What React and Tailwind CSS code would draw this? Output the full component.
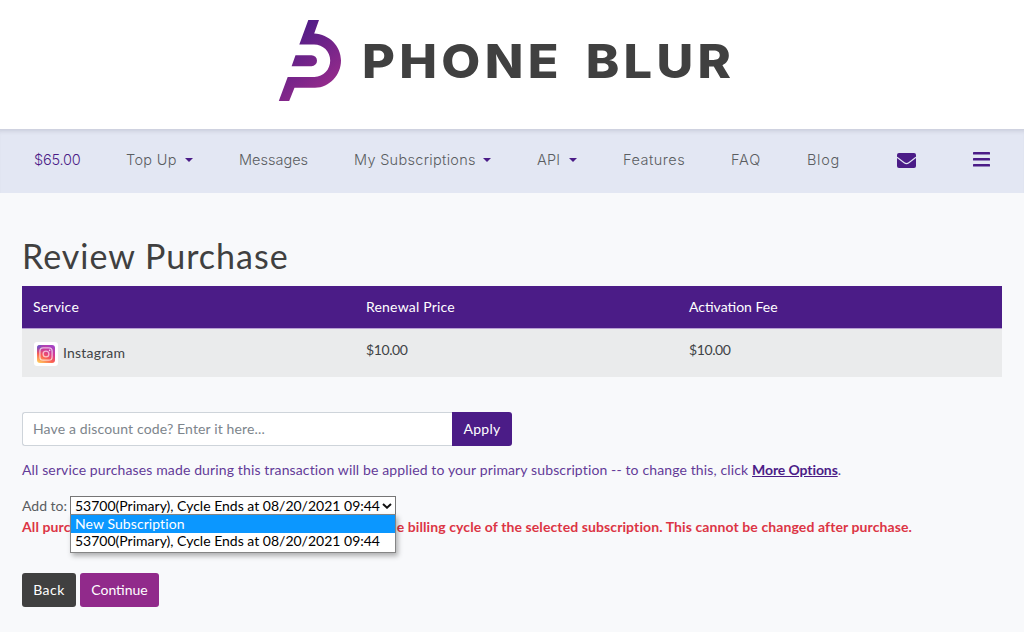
import React from "react";

const Caret = () => (
  <span className="h-0 w-0 border-x-4 border-t-4 border-x-transparent border-t-[#4b1c87]" />
);

const NavItem = ({ children, className }) => (
  <a className={`flex shrink-0 items-center justify-between whitespace-nowrap ${className}`}>{children}</a>
);

const Logo = () => (
  <svg width="64" height="84" viewBox="0 0 64 84" className="shrink-0">
    <defs>
      <linearGradient id="brand" x1="10" y1="10" x2="52" y2="62" gradientUnits="userSpaceOnUse">
        <stop offset="0" stopColor="#4b1c87" />
        <stop offset="1" stopColor="#912a8b" />
      </linearGradient>
    </defs>
    <g fill="url(#brand)">
      <path d="M30.3 1H41L36.2 14.4C51 15 63 27 63 41.5C63 56 51.5 68.5 37 68.8H16.5L11.2 82H.8L9.7 58H36.5C45.5 58 52.2 50.6 52.2 41.6C52.2 32.5 45 25.6 36 25.6H21.3Z" />
      <path d="M17.5 36.2H33.5A5.4 5.4 0 0 1 33.5 47.2H13.6Z" />
    </g>
  </svg>
);

const Instagram = () => (
  <span className="flex h-6 w-6 shrink-0 items-center justify-center rounded-[3px] bg-white">
    <svg width="18" height="18" viewBox="0 0 18 18">
      <defs>
        <linearGradient id="ig" x1="3" y1="18" x2="13" y2="0" gradientUnits="userSpaceOnUse">
          <stop offset="0" stopColor="#ffc85c" />
          <stop offset=".35" stopColor="#fa5d52" />
          <stop offset=".65" stopColor="#d63a91" />
          <stop offset="1" stopColor="#a443c4" />
        </linearGradient>
        <radialGradient id="igBlue" cx="0" cy="0" r="9" gradientUnits="userSpaceOnUse">
          <stop offset="0" stopColor="#4368d8" />
          <stop offset="1" stopColor="#8a45cc" stopOpacity="0" />
        </radialGradient>
      </defs>
      <rect width="18" height="18" rx="3" fill="url(#ig)" />
      <rect width="18" height="18" rx="3" fill="url(#igBlue)" />
      <g fill="none" stroke="#fff" strokeOpacity=".65" strokeWidth="1.3">
        <rect x="2.9" y="2.9" width="12.2" height="12.2" rx="3.2" />
        <circle cx="9" cy="9" r="2.9" />
      </g>
      <circle cx="12.6" cy="5.4" r=".8" fill="#fff" fillOpacity=".8" />
    </svg>
  </span>
);

export default function App() {
  return (
    <div className="h-[632px] w-[1024px] overflow-hidden bg-[#f8f9fb] font-['Lato',sans-serif] text-[14px] text-[#5a5d61]">
      <header className="flex h-[129px] bg-white pl-[278px] pt-[19px]">
        <Logo />
        <span className="ml-[20px] mt-[18px] origin-left scale-x-[1.075] whitespace-nowrap font-['Inter',sans-serif] text-[47px] font-extrabold leading-[48px] tracking-[4px] text-[#404040] [word-spacing:7px]">
          PHONE BLUR
        </span>
      </header>

      <nav className="flex h-16 items-center gap-[46px] bg-[#e3e7f3] pb-[2px] pl-[34px] font-['Inter',sans-serif] text-[14.5px] font-light shadow-[inset_0_5px_4px_-3px_rgba(60,65,90,0.16)]">
        <NavItem className="w-[46px] tracking-[-0.2px] text-[#4b1c87]">$65.00</NavItem>
        <NavItem className="w-[67px] tracking-[0.3px]">Top Up<Caret /></NavItem>
        <NavItem className="w-[69px]">Messages</NavItem>
        <NavItem className="w-[137px] tracking-[0.3px]">My Subscriptions<Caret /></NavItem>
        <NavItem className="w-[40px] tracking-[0.2px]">API<Caret /></NavItem>
        <NavItem className="w-[62px] tracking-[0.5px]">Features</NavItem>
        <NavItem className="w-[30px] tracking-[0.9px]">FAQ</NavItem>
        <NavItem className="w-[33px] tracking-[0.7px]">Blog</NavItem>
        <NavItem className="ml-[11px] w-[19px]">
          <svg width="19" height="15" viewBox="0 0 19 15">
            <rect width="19" height="15" rx="2" fill="#4b1c87" />
            <path d="M0 4.2L7.2 9.7Q9.5 11.5 11.8 9.7L19 4.2" fill="none" stroke="#e3e7f3" strokeWidth="1.1" />
          </svg>
        </NavItem>
        <NavItem className="ml-[11px] w-[17px] pb-[2px]">
          <svg width="17" height="15" viewBox="0 0 17 15" fill="#4b1c87">
            <rect width="17" height="2.6" rx=".6" />
            <rect y="6" width="17" height="2.6" rx=".6" />
            <rect y="12" width="17" height="2.6" rx=".6" />
          </svg>
        </NavItem>
      </nav>

      <main className="px-[22px] pt-[42px]">
        <h1 className="h-[51px] whitespace-nowrap text-[34px] leading-[42px] tracking-[1px] text-[#404040]">
          Review Purchase
        </h1>

        <section className="w-[980px]">
          <div className="grid h-[43px] grid-cols-[333px_323px_1fr] items-center border-b border-[#b79fd3] bg-[#4b1c87] pb-[2px] pl-[11px] text-white">
            <span className="tracking-[0.2px]">Service</span>
            <span className="tracking-[0.2px]">Renewal Price</span>
            <span>Activation Fee</span>
          </div>
          <div className="grid h-12 grid-cols-[333px_323px_1fr] items-start bg-[#eaebec] pl-[11px] pt-3 text-[#404346]">
            <span className="flex items-center gap-[5px] pl-px leading-6 tracking-[0.2px]">
              <Instagram />
              <span className="pb-[2px]">Instagram</span>
            </span>
            <span className="-mt-px leading-5 tracking-[-0.4px]">$10.00</span>
            <span className="-mt-px leading-5 tracking-[-0.4px]">$10.00</span>
          </div>
        </section>

        <form className="mt-[35px] flex h-[34px] w-[490px]">
          <div className="flex flex-1 items-center rounded-l-[3px] border border-r-0 border-[#ced4da] bg-white pb-[2px] pl-[10px] tracking-[0.14px] text-[#7d858c]">
            Have a discount code? Enter it here...
          </div>
          <button type="button" className="w-[60px] rounded-r-[3px] bg-[#4b1c87] pb-[2px] tracking-[0.3px] text-white">Apply</button>
        </form>

        <p className="mt-[14px] h-5 whitespace-nowrap leading-5 tracking-[0.13px] text-[#633b98]">
          All service purchases made during this transaction will be applied to your primary subscription -- to change this, click{" "}
          <b className="tracking-[-0.1px] text-[#4b1c87] underline">More Options</b>.
        </p>

        <div className="relative mt-[15px] flex h-[21px] items-center whitespace-nowrap">
          <span className="w-[48px] pb-px">Add to:</span>
          <div className="flex h-[19px] w-[326px] items-center justify-between border border-[#767676] bg-white pl-1 pr-[3px] text-black">
            <span className="pb-px">53700(Primary), Cycle Ends at 08/20/2021 09:44</span>
            <svg className="shrink-0" width="10" height="6" viewBox="0 0 10 6" fill="none" stroke="#111" strokeWidth="2">
              <path d="M1 1L5 4.7L9 1" />
            </svg>
          </div>
          <div className="absolute left-[48px] top-[19px] z-10 h-[39px] w-[326px] border border-[#858585] bg-white text-black shadow-[2px_3px_5px_rgba(0,0,0,0.3)]">
            <div className="h-[18px] bg-[#0b97ff] pl-1 leading-[17px] tracking-[0.08px] text-white">New Subscription</div>
            <div className="h-[18px] pl-1 leading-[16px]">53700(Primary), Cycle Ends at 08/20/2021 09:44</div>
          </div>
        </div>

        <p className="mt-px flex h-5 justify-between whitespace-nowrap pr-[90px] font-bold leading-5 tracking-[0.1px] text-[#dc3545]">
          <span>All purc</span>
          <span>e billing cycle of the selected subscription. This cannot be changed after purchase.</span>
        </p>

        <div className="mt-9 flex h-[34px] gap-1 text-white">
          <button type="button" className="w-[54px] rounded-[3px] bg-[#404040] pb-[2px] tracking-[0.5px]">Back</button>
          <button type="button" className="w-[79px] rounded-[3px] bg-[#912a8b] pb-[2px]">Continue</button>
        </div>
      </main>
    </div>
  );
}
